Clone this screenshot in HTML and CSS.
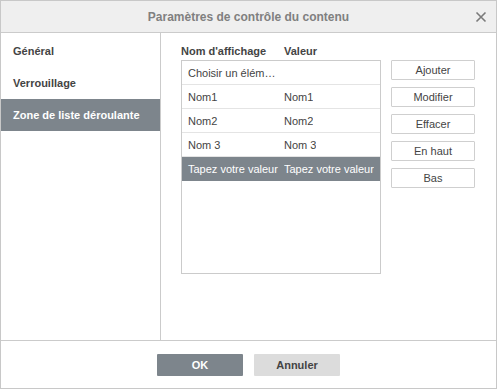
FILE: index.html
```html
<!DOCTYPE html>
<html lang="fr">
  <head>
    <meta charset="UTF-8" />
    <title>Paramètres de contrôle du contenu</title>
    <link rel="stylesheet" href="styles.css">
  </head>
  <body>
    <div class="dialog">
      <div class="dialog__header">
        <span class="dialog__title">Paramètres de contrôle du contenu</span>
        <span class="dialog__close">
          <svg width="12" height="12" viewBox="0 0 12 12">
            <path d="M1.5 1.5 L10.5 10.5 M10.5 1.5 L1.5 10.5" stroke="#7a7a7a" stroke-width="1.6" fill="none" />
          </svg>
        </span>
      </div>
      <div class="dialog__body">
        <ul class="menu">
          <li class="menu__item">Général</li>
          <li class="menu__item">Verrouillage</li>
          <li class="menu__item menu__item--active">Zone de liste déroulante</li>
        </ul>
        <div class="panel">
          <div class="panel__list">
            <div class="cols">
              <span class="col col--name">Nom d'affichage</span>
              <span class="col">Valeur</span>
            </div>
            <div class="listbox">
              <div class="row"><span class="cell cell--name">Choisir un élém…</span><span class="cell"></span></div>
              <div class="row"><span class="cell cell--name">Nom1</span><span class="cell">Nom1</span></div>
              <div class="row"><span class="cell cell--name">Nom2</span><span class="cell">Nom2</span></div>
              <div class="row"><span class="cell cell--name">Nom 3</span><span class="cell">Nom 3</span></div>
              <div class="row row--selected"><span class="cell cell--name">Tapez votre valeur</span><span class="cell">Tapez votre valeur</span></div>
            </div>
          </div>
          <div class="actions">
            <button class="btn">Ajouter</button>
            <button class="btn">Modifier</button>
            <button class="btn">Effacer</button>
            <button class="btn">En haut</button>
            <button class="btn">Bas</button>
          </div>
        </div>
      </div>
      <div class="dialog__footer">
        <button class="footer-btn footer-btn--primary">OK</button>
        <button class="footer-btn">Annuler</button>
      </div>
    </div>
  </body>
</html>
```

FILE: styles.css
```css
* {
  box-sizing: border-box;
}

body {
  margin: 0;
  padding: 0;
  font-family: "Liberation Sans", Arial, sans-serif;
  font-size: 11px;
  color: #444;
  background: #fff;
}

.dialog {
  width: 497px;
  height: 389px;
  border: 1px solid #c8c8c8;
  display: flex;
  flex-direction: column;
}

.dialog__header {
  height: 32px;
  flex: none;
  background: #efefef;
  border-bottom: 1px solid #cbcbcb;
  display: flex;
  align-items: center;
  justify-content: center;
  position: relative;
}

.dialog__title {
  font-size: 12px;
  font-weight: bold;
  color: #808080;
}

.dialog__close {
  position: absolute;
  right: 9px;
  top: 10px;
  width: 12px;
  height: 12px;
  display: flex;
}

.dialog__body {
  flex: 1;
  display: flex;
  min-height: 0;
}

.menu {
  list-style: none;
  margin: 0;
  padding: 2px 0 0;
  width: 160px;
  flex: none;
  border-right: 1px solid #cbcbcb;
}

.menu__item {
  height: 32px;
  padding: 0 12px;
  display: flex;
  align-items: center;
  font-weight: bold;
  color: #444;
}

.menu__item--active {
  background: #7d858c;
  color: #fff;
}

.panel {
  flex: 1;
  display: flex;
  padding: 12px 0 0 20px;
  gap: 10px;
}

.cols {
  display: flex;
  height: 15px;
  font-weight: bold;
  color: #444;
}

.col--name {
  width: 103px;
}

.listbox {
  width: 200px;
  height: 214px;
  border: 1px solid #cbcbcb;
}

.row {
  display: flex;
  height: 24px;
  align-items: center;
  border-bottom: 1px solid #e4e4e4;
  color: #444;
}

.row--selected {
  background: #7d858c;
  color: #fff;
  border-bottom-color: #7d858c;
}

.cell {
  white-space: nowrap;
  overflow: hidden;
}

.cell--name {
  width: 102px;
  padding-left: 6px;
}

.actions {
  display: flex;
  flex-direction: column;
  gap: 7px;
  padding-top: 15px;
}

.btn {
  width: 84px;
  height: 20px;
  padding: 0;
  background: #fff;
  border: 1px solid #cfcfcf;
  border-radius: 1px;
  font-family: inherit;
  font-size: 11px;
  color: #444;
}

.dialog__footer {
  height: 48px;
  flex: none;
  border-top: 1px solid #cbcbcb;
  display: flex;
  justify-content: center;
  align-items: center;
  gap: 11px;
}

.footer-btn {
  width: 86px;
  height: 22px;
  padding: 0;
  border: none;
  border-radius: 1px;
  background: #dcdcdc;
  font-family: inherit;
  font-size: 11px;
  font-weight: bold;
  color: #444;
}

.footer-btn--primary {
  background: #7d858c;
  color: #fff;
}
```
